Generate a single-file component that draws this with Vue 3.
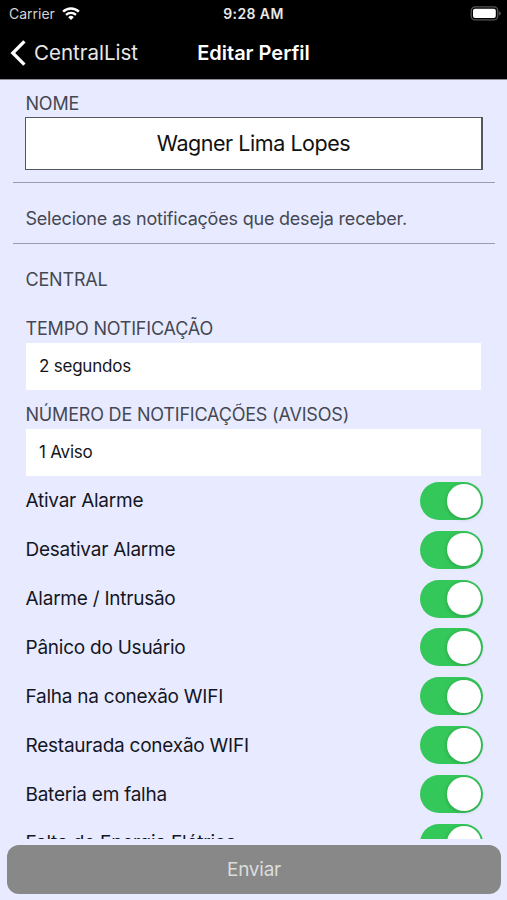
<template>
  <div class="screen">
    <header class="header">
      <div class="status-bar">
        <div class="carrier">
          <span>Carrier</span>
          <svg class="wifi" viewBox="0 0 18 13" width="18" height="13">
            <path d="M1.1 4.7a11.2 11.2 0 0 1 15.8 0" fill="none" stroke="#fff" stroke-width="2.5" />
            <path d="M4 7.9a7.1 7.1 0 0 1 10 0" fill="none" stroke="#fff" stroke-width="2.2" />
            <path d="M9 13 6.2 10.2a4 4 0 0 1 5.6 0z" fill="#fff" />
          </svg>
        </div>
        <span class="clock">9:28 AM</span>
        <svg class="battery" viewBox="0 0 32 15" width="32" height="15">
          <rect x="1.2" y="0.9" width="26.6" height="13" rx="4" fill="none" stroke="#555" stroke-width="1.3" />
          <rect x="3" y="2.7" width="22.8" height="9.4" rx="2" fill="#fff" />
          <path d="M29.2 5.2c2 .8 2 3.6 0 4.4z" fill="#666" />
        </svg>
      </div>
      <nav class="nav-bar">
        <a class="back">
          <svg viewBox="0 0 16 26" width="16" height="26">
            <path d="M14.4 1.4 2.8 13l11.6 11.6" fill="none" stroke="#fff" stroke-width="3.3" />
          </svg>
          <span>CentralList</span>
        </a>
        <h1 class="title">Editar Perfil</h1>
      </nav>
    </header>

    <main class="content">
      <section class="profile">
        <label class="label">NOME</label>
        <input v-model="name" class="name-input" type="text" />
      </section>
      <p class="hint"><span>Selecione as notificações que deseja receber.</span></p>
      <section class="central">
        <h2 class="label">CENTRAL</h2>
        <label class="label time-label">TEMPO NOTIFICAÇÃO</label>
        <div class="select">{{ time }}</div>
        <label class="label count-label">NÚMERO DE NOTIFICAÇÕES (AVISOS)</label>
        <div class="select">{{ count }}</div>
        <ul class="options">
          <li v-for="item in options" :key="item.label" class="option">
            <span>{{ item.label }}</span>
            <button class="switch" :class="{ on: item.active }" @click="item.active = !item.active">
              <i class="knob"></i>
            </button>
          </li>
        </ul>
      </section>
    </main>

    <footer class="footer">
      <button class="submit">Enviar</button>
    </footer>
  </div>
</template>

<script setup>
import { ref } from 'vue'

const name = ref('Wagner Lima Lopes')
const time = ref('2 segundos')
const count = ref('1 Aviso')

const options = ref([
  { label: 'Ativar Alarme', active: true },
  { label: 'Desativar Alarme', active: true },
  { label: 'Alarme / Intrusão', active: true },
  { label: 'Pânico do Usuário', active: true },
  { label: 'Falha na conexão WIFI', active: true },
  { label: 'Restaurada conexão WIFI', active: true },
  { label: 'Bateria em falha', active: true },
  { label: 'Falta de Energia Elétrica', active: true },
])
</script>

<style>
body {
  margin: 0;
  background: #e8ebff;
}
</style>

<style scoped>
* {
  box-sizing: border-box;
}

.screen {
  display: flex;
  flex-direction: column;
  height: 900px;
  overflow: hidden;
  background: #e8ebff;
  font-family: Inter, "Liberation Sans", sans-serif;
}

.header {
  height: 80px;
  flex: none;
  background: #000;
  border-bottom: 1px solid #8b8c94;
  color: #fff;
}

.status-bar {
  display: grid;
  grid-template-columns: 1fr auto 1fr;
  align-items: center;
  height: 27px;
  padding: 0 5px;
  font-size: 14px;
}

.carrier {
  display: flex;
  align-items: center;
  gap: 7px;
  padding-left: 4px;
  color: #d4d4d4;
}

.wifi {
  margin-top: -1px;
}

.clock {
  font-weight: 600;
  letter-spacing: 0.4px;
  color: #e8e8e8;
}

.battery {
  justify-self: end;
}

.nav-bar {
  display: grid;
  grid-template-columns: 1fr auto 1fr;
  align-items: center;
  height: 51px;
  padding: 0 10px;
}

.back {
  display: flex;
  align-items: center;
  gap: 8px;
  font-size: 20.5px;
  color: #e8e8e8;
}

.title {
  margin: 0;
  font-size: 20px;
  font-weight: 600;
}

.content {
  height: 759px;
  flex: none;
  overflow: hidden;
}

.profile {
  height: 102px;
  padding: 10px 25px 0;
}

.label {
  display: block;
  margin: 0;
  font-size: 18px;
  font-weight: 400;
  line-height: 27px;
  letter-spacing: -0.19px;
  color: #454853;
}

.profile .label {
  padding-left: 0.5px;
}

.name-input {
  display: block;
  width: 458px;
  height: 53px;
  padding: 0 0 2px;
  border: 1px solid #55575e;
  border-right-width: 2px;
  border-radius: 0;
  background: #fff;
  font: inherit;
  font-size: 21.5px;
  letter-spacing: -0.45px;
  color: #111;
  text-align: center;
}

.hint {
  display: flex;
  align-items: center;
  height: 62px;
  margin: 0 12px 0 13px;
  padding: 10px 12.5px 0;
  border: solid #9a9dac;
  border-width: 1px 0;
  font-size: 18px;
  letter-spacing: -0.21px;
  color: #454853;
}

.central {
  padding: 22px 26px 0 25.5px;
}

.time-label {
  margin-top: 22px;
}

.select {
  height: 47px;
  margin: 1px 0 0 0.5px;
  padding: 0 13px;
  background: #fff;
  font-size: 17px;
  line-height: 46px;
  letter-spacing: -0.22px;
  color: #15161a;
}

.count-label {
  margin-top: 10.5px;
}

.options {
  margin: 0;
  padding: 0.9px 0 0;
  list-style: none;
}

.option {
  display: flex;
  align-items: center;
  justify-content: space-between;
  height: 48.88px;
  margin-right: -1.5px;
  font-size: 19px;
  letter-spacing: -0.24px;
  color: #15161f;
}

.switch {
  display: flex;
  align-items: center;
  width: 62.5px;
  height: 38px;
  padding: 2px;
  border: 0;
  border-radius: 19px;
  background: #c9ccd8;
}

.switch.on {
  justify-content: flex-end;
  background: #34c759;
}

.knob {
  width: 33.5px;
  height: 33.5px;
  border-radius: 50%;
  background: #fff;
  box-shadow: 0 1px 4px rgba(0, 0, 0, 0.2);
}

.footer {
  padding: 6px 6px 0 7px;
}

.submit {
  display: block;
  width: 100%;
  height: 49px;
  border: 0;
  border-radius: 12px;
  background: #888;
  font: inherit;
  font-size: 19px;
  letter-spacing: -0.25px;
  color: #dcdcdc;
}
</style>
